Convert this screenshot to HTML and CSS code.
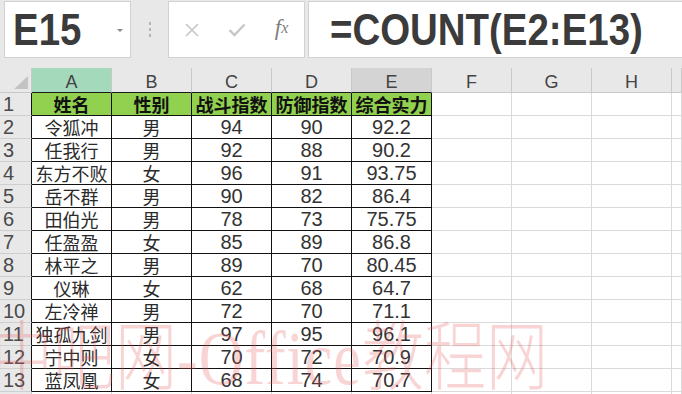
FILE: index.html
```html
<!DOCTYPE html>
<html lang="zh">
<head>
<meta charset="utf-8">
<title>COUNT</title>
<link rel="stylesheet" href="styles.css">
</head>
<body>
<div class="app">
  <div class="toolbar">
    <div class="namebox">
      <span class="big">E15</span>
      <span class="caret"></span>
    </div>
    <div class="sep"><i></i><i></i><i></i></div>
    <div class="fxbox">
      <span class="slot"><svg width="16" height="16" viewBox="0 0 16 16"><path d="M2 2 L14 14 M14 2 L2 14" stroke="#c6c6c6" stroke-width="1.6" fill="none"/></svg></span>
      <span class="slot"><svg width="18" height="14" viewBox="0 0 18 14"><path d="M1.5 7 L6.5 12 L16.5 1.5" stroke="#c6c6c6" stroke-width="2.4" fill="none"/></svg></span>
      <span class="slot fx">f<sub>x</sub></span>
    </div>
    <div class="formula"><span class="big">=COUNT(E2:E13)</span></div>
  </div>

  <div class="sheet">
    <div class="ch corner"><span class="tri"></span></div>
    <div class="ch dc sel-a">A</div>
    <div class="ch dc">B</div>
    <div class="ch dc">C</div>
    <div class="ch dc">D</div>
    <div class="ch dc sel-e">E</div>
    <div class="ch">F</div>
    <div class="ch">G</div>
    <div class="ch">H</div>
    <div class="ch"></div>

    <div class="rh d">1</div>
    <div class="c d hd">姓名</div><div class="c d hd">性别</div><div class="c d hd">战斗指数</div><div class="c d hd">防御指数</div><div class="c d hd">综合实力</div>
    <div class="c"></div><div class="c"></div><div class="c"></div><div class="c"></div>

    <div class="rh d">2</div>
    <div class="c d cj">令狐冲</div><div class="c d cj">男</div><div class="c d">94</div><div class="c d">90</div><div class="c d">92.2</div>
    <div class="c"></div><div class="c"></div><div class="c"></div><div class="c"></div>

    <div class="rh d">3</div>
    <div class="c d cj">任我行</div><div class="c d cj">男</div><div class="c d">92</div><div class="c d">88</div><div class="c d">90.2</div>
    <div class="c"></div><div class="c"></div><div class="c"></div><div class="c"></div>

    <div class="rh d">4</div>
    <div class="c d cj">东方不败</div><div class="c d cj">女</div><div class="c d">96</div><div class="c d">91</div><div class="c d">93.75</div>
    <div class="c"></div><div class="c"></div><div class="c"></div><div class="c"></div>

    <div class="rh d">5</div>
    <div class="c d cj">岳不群</div><div class="c d cj">男</div><div class="c d">90</div><div class="c d">82</div><div class="c d">86.4</div>
    <div class="c"></div><div class="c"></div><div class="c"></div><div class="c"></div>

    <div class="rh d">6</div>
    <div class="c d cj">田伯光</div><div class="c d cj">男</div><div class="c d">78</div><div class="c d">73</div><div class="c d">75.75</div>
    <div class="c"></div><div class="c"></div><div class="c"></div><div class="c"></div>

    <div class="rh d">7</div>
    <div class="c d cj">任盈盈</div><div class="c d cj">女</div><div class="c d">85</div><div class="c d">89</div><div class="c d">86.8</div>
    <div class="c"></div><div class="c"></div><div class="c"></div><div class="c"></div>

    <div class="rh d">8</div>
    <div class="c d cj">林平之</div><div class="c d cj">男</div><div class="c d">89</div><div class="c d">70</div><div class="c d">80.45</div>
    <div class="c"></div><div class="c"></div><div class="c"></div><div class="c"></div>

    <div class="rh d">9</div>
    <div class="c d cj">仪琳</div><div class="c d cj">女</div><div class="c d">62</div><div class="c d">68</div><div class="c d">64.7</div>
    <div class="c"></div><div class="c"></div><div class="c"></div><div class="c"></div>

    <div class="rh d">10</div>
    <div class="c d cj">左冷禅</div><div class="c d cj">男</div><div class="c d">72</div><div class="c d">70</div><div class="c d">71.1</div>
    <div class="c"></div><div class="c"></div><div class="c"></div><div class="c"></div>

    <div class="rh d">11</div>
    <div class="c d cj">独孤九剑</div><div class="c d cj">男</div><div class="c d">97</div><div class="c d">95</div><div class="c d">96.1</div>
    <div class="c"></div><div class="c"></div><div class="c"></div><div class="c"></div>

    <div class="rh d">12</div>
    <div class="c d cj">宁中则</div><div class="c d cj">女</div><div class="c d">70</div><div class="c d">72</div><div class="c d">70.9</div>
    <div class="c"></div><div class="c"></div><div class="c"></div><div class="c"></div>

    <div class="rh d">13</div>
    <div class="c d cj">蓝凤凰</div><div class="c d cj">女</div><div class="c d">68</div><div class="c d">74</div><div class="c d">70.7</div>
    <div class="c"></div><div class="c"></div><div class="c"></div><div class="c"></div>

    <div class="rh">14</div>
    <div class="c"></div><div class="c"></div><div class="c"></div><div class="c"></div><div class="c"></div>
    <div class="c"></div><div class="c"></div><div class="c"></div><div class="c"></div>
  </div>

  <div class="watermark"><span class="cjk">中吧网</span><span class="lat">-Office</span><span class="cjk">教程网</span></div>
</div>
</body>
</html>
```

FILE: styles.css
```css
* { box-sizing: border-box; }
html, body { margin: 0; padding: 0; }
body {
  width: 682px;
  height: 394px;
  overflow: hidden;
  background: #ffffff;
  font-family: "Liberation Sans", "Noto Sans CJK SC", sans-serif;
  color: #2a2a2a;
}
.app {
  position: relative;
  width: 682px;
  height: 394px;
  overflow: hidden;
}

/* toolbar */
.toolbar {
  height: 68px;
  background: #e8e8e8;
  display: flex;
  align-items: flex-start;
  padding-top: 1px;
}
.namebox, .fxbox, .formula {
  height: 57px;
  background: #ffffff;
  border: 1px solid #d2d2d2;
  display: flex;
  align-items: center;
}
.namebox {
  margin-left: 4px;
  width: 127px;
  padding-left: 8px;
  position: relative;
}
.big {
  display: inline-block;
  font-family: "Liberation Sans", sans-serif;
  font-weight: bold;
  font-size: 42px;
  color: #3b3b3b;
  transform: scale(0.915, 1.04);
  transform-origin: left center;
  white-space: nowrap;
  line-height: 1;
}
.caret {
  position: absolute;
  left: 112px;
  top: 27px;
  width: 0;
  height: 0;
  border-left: 3px solid transparent;
  border-right: 3px solid transparent;
  border-top: 3px solid #8a8a8a;
}
.sep {
  width: 37px;
  height: 57px;
  display: flex;
  flex-direction: column;
  align-items: center;
  justify-content: center;
  gap: 3px;
}
.sep i {
  display: block;
  width: 2px;
  height: 3px;
  background: #b4b4b4;
}
.fxbox {
  width: 137px;
}
.slot {
  width: 45px;
  display: flex;
  align-items: center;
  justify-content: center;
}
.fx {
  font-family: "Liberation Serif", serif;
  font-style: italic;
  font-size: 23px;
  color: #7e7e7e;
  padding-bottom: 4px;
  line-height: 1;
}
.fx sub {
  font-size: 16px;
  vertical-align: -4px;
}
.formula {
  margin-left: 3px;
  flex: 1;
  border-right: none;
  padding-left: 21px;
}

/* sheet */
.sheet {
  display: grid;
  grid-template-columns: 32px repeat(8, 80px) 1fr;
  grid-template-rows: 25px repeat(14, 23px);
}
.ch, .rh, .c {
  border-right: 1px solid #dadada;
  border-bottom: 1px solid #dadada;
  display: flex;
  align-items: center;
  justify-content: center;
  white-space: nowrap;
  line-height: 1;
}
.ch {
  background: #e8e8e8;
  border-right-color: #c9c9c9;
  border-bottom-color: #c9c9c9;
  font-size: 18px;
  color: #444;
  padding-top: 3px;
}
.ch.dc { border-bottom-color: #1a1a1a; }
.ch.sel-a { background: #a4d9bc; }
.ch.sel-e { background: #d4d4d4; }
.corner {
  position: relative;
  border-right-color: #c9c9c9;
}
.tri {
  position: absolute;
  right: 3px;
  bottom: 3px;
  width: 0;
  height: 0;
  border-left: 14px solid transparent;
  border-bottom: 13px solid #c3c3c3;
}
.rh {
  background: #e8e8e8;
  border-bottom-color: #cfcfcf;
  border-right-color: #c9c9c9;
  justify-content: flex-start;
  padding-left: 3px;
  font-size: 20px;
  color: #4a4a4a;
}
.rh.d { border-right-color: #111; }
.c {
  font-size: 20px;
  color: #333;
}
.c.d {
  border-right-color: #111;
  border-bottom-color: #111;
}
.c.cj {
  font-family: "Noto Sans CJK SC", sans-serif;
  font-size: 18px;
  color: #2a2a2a;
}
.c.hd {
  background: #92d050;
  font-family: "Noto Sans CJK SC", sans-serif;
  font-weight: bold;
  font-size: 18px;
  color: #111;
}

/* watermark overlay */
.watermark {
  position: absolute;
  left: -9px;
  top: 313px;
  font-family: "Liberation Serif", "Noto Sans CJK SC", serif;
  font-size: 62px;
  line-height: 1;
  color: rgba(228, 90, 90, 0.26);
  white-space: nowrap;
  transform: scaleY(1.22);
  transform-origin: left top;
  pointer-events: none;
}
.watermark .cjk {
  font-family: "Noto Sans CJK SC", sans-serif;
  font-weight: 300;
}
.watermark .lat {
  letter-spacing: 1px;
}
```
